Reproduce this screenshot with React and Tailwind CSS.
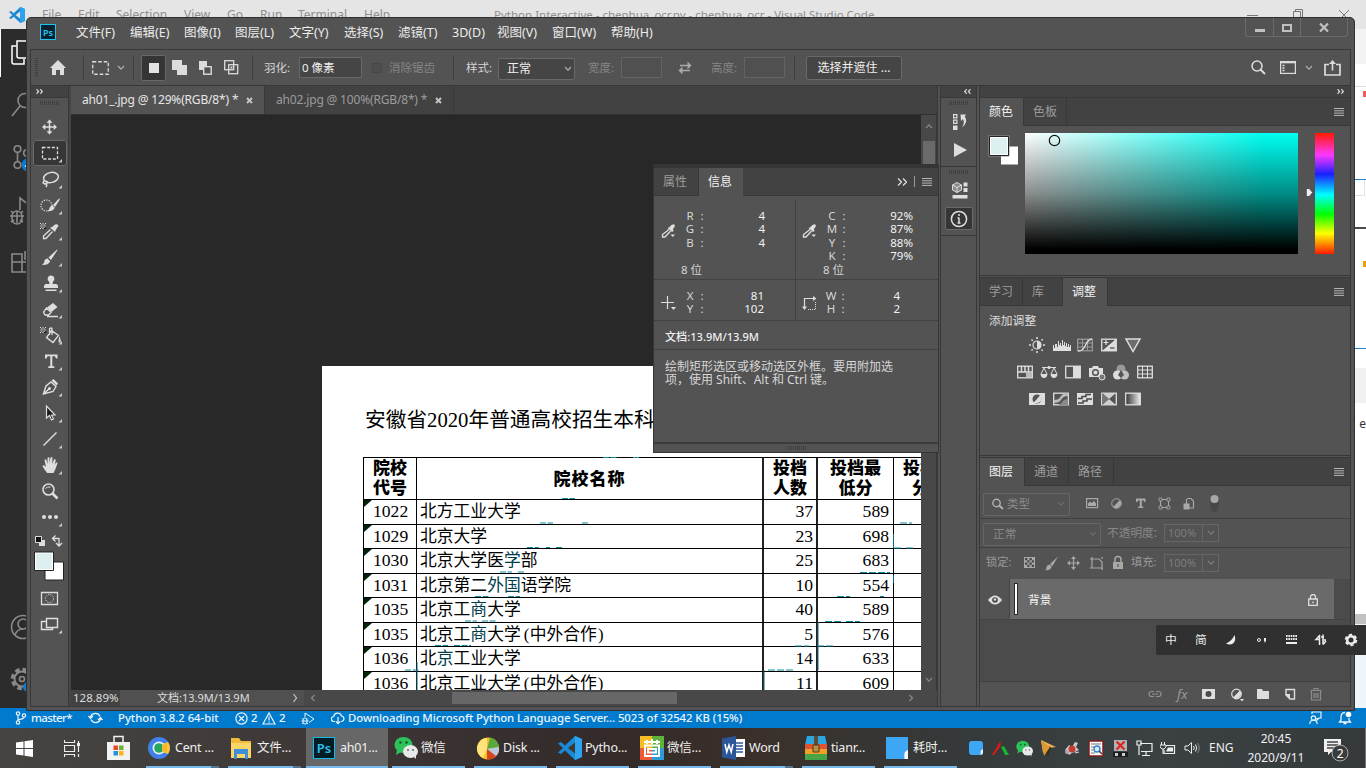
import React from 'react';

const Svg = ({ w, h, className = '', children }) => (
  <svg width={w} height={h} viewBox={`0 0 ${w} ${h}`} fill="none" className={`block shrink-0 ${className}`}>
    {children}
  </svg>
);

const Burger = () => (
  <Svg w={10} h={8}>
    <path d="M0 .5h10M0 2.800h10M0 5.100h10M0 7.400h10" stroke="#b5b5b5" />
  </Svg>
);

const Chev = ({ c = '#b0b0b0', className = '' }) => (
  <Svg w={8} h={6} className={className}>
    <path d="M1 1l3 3.200L7 1" stroke={c} strokeWidth="1.200" />
  </Svg>
);

const Grip = () => (
  <Svg w={19} h={4}>
    <path d="M.5 0v4M2.500 0v4M4.500 0v4M6.500 0v4M8.500 0v4M10.500 0v4M12.500 0v4M14.500 0v4M16.500 0v4M18.500 0v4" stroke="#404040" />
  </Svg>
);

const Dbl = ({ flip }) => (
  <Svg w={7} h={5} className={flip ? '-scale-x-100' : ''}>
    <path d="M0 0h1.200L3.500 2.500 1.200 5H0l1.500-2.500zM3.700 0h1.200L7.200 2.500 4.900 5H3.700l1.500-2.500z" fill="#d0d0d0" />
  </Svg>
);

/* ---------- editor behind the Photoshop window ---------- */

const codeMenu = [
  ['File', 'w-[36px]'], ['Edit', 'w-[38px]'], ['Selection', 'w-[68px]'], ['View', 'w-[43px]'],
  ['Go', 'w-[33px]'], ['Run', 'w-[38px]'], ['Terminal', 'w-[66px]'], ['Help', 'w-[130px]'],
];

const CodeLogo = ({ s = 16 }) => (
  <svg width={s} height={s} viewBox="0 0 24 24" className="block shrink-0">
    <path d="M17 0l7 3v18l-7 3L7 14.500 3 18l-3-1.500L5 12 0 7.500 3 6l4 3.500z" fill="#1a8ad6" />
    <path d="M17 6.500L10 12l7 5.500z" fill={s > 18 ? '#3b3836' : '#e5e5e5'} />
    <path d="M17 0l7 3v18l-7 3z" fill="#2fa4ee" />
  </svg>
);

function Editor() {
  return (
    <div className="flex h-[728px] w-[1366px] flex-col">
      <div className="flex h-[29px] shrink-0 items-center bg-[#e5e5e5] pl-[9px] text-[12px] text-[#8f8f8f]">
        <CodeLogo s={16} />
        <div className="ml-[17px] flex pt-px">
          {codeMenu.map(([t, w]) => <span key={t} className={`${w} shrink-0`}>{t}</span>)}
        </div>
        <span className="w-[752px] pt-px text-[11.500px] whitespace-nowrap">Python Interactive - chenhua_ocr.py - chenhua_ocr - Visual Studio Code</span>
        <Svg w={106} h={12}>
          <path d="M1 6.500h11M47.500 11V2.500h7V11M49.500 2.500V.5h7V9M93 1l10 10M103 1L93 11" stroke="#777" />
        </Svg>
      </div>
      <div className="flex h-[679px] shrink-0 justify-between">
        <div className="flex w-[27px] flex-col overflow-hidden bg-[#2c2c2c]">
          <Svg w={30} h={679}>
            <path d="M.5 0v48" stroke="#fff" strokeWidth="1" />
            <g stroke="#fff" strokeWidth="1.500"><path d="M17 12h10v17H19q-2 0-2-2z" /><path d="M16.500 17H12v16q0 2 2 2h10v-5" /></g>
            <g stroke="#8a8a8a" strokeWidth="1.600">
              <circle cx="25" cy="71.500" r="7" /><path d="M20 77l-8 10" />
              <circle cx="17.500" cy="120" r="3.300" /><circle cx="17.500" cy="136" r="3.300" /><path d="M17.500 123v10" /><circle cx="27" cy="124" r="3.300" />
              <path d="M20 181v-12l9 7M17 182a5 5 0 015 5v3a5 5 0 01-10 0v-3a5 5 0 015-5zM11 182l2 2M23 182l-2 2M10 187h14M11 193l3-2M23 193l-3-2M17 182v12" />
              <path d="M12 225h10v18H12zM12 233h16v10H22M25 223h5v7h-5z" />
              <circle cx="23" cy="598" r="11.500" /><circle cx="23" cy="595" r="5" /><path d="M15 606q2-6 8-6" />
              <circle cx="22" cy="650" r="9.500" strokeDasharray="4.500 3" strokeWidth="3.500" /><circle cx="22" cy="650" r="7.500" strokeWidth="2" /><circle cx="22" cy="650" r="2.500" />
            </g>
            <circle cx="28" cy="136" r="6.500" fill="#0e7bd0" /><path d="M25 138l3-5v6" stroke="#fff" />
            <circle cx="28" cy="658" r="5" fill="#0e7bd0" />
          </Svg>
        </div>
        <div className="flex w-[11px] flex-col bg-white">
          <div className="h-[35px] bg-[#f3f3f3]" />
          <div className="h-[22px]" />
          <div className="h-px bg-[#ddd]" />
          <div className="mt-1 ml-[8px] h-[6px] bg-[#f65a5e]" />
          <div className="mt-[82px] h-px bg-[#1f82cb]" />
          <div className="mr-px h-[16px] border-r border-b border-[#e2e2e2]" />
          <div className="mt-[31px] h-[2px] bg-[#4c4c4c]" />
          <div className="mt-[32px] ml-[8px] h-[6px] bg-[#e9a200]" />
          <div className="mt-[81px] h-px bg-[#1f82cb]" />
          <div className="mt-[19px] h-[35px] bg-[#f1f1f1]" />
          <div className="mt-[12px] flex h-[18px] justify-end text-[12px] text-[#333]">e</div>
          <div className="mt-[181px] h-[10px] bg-[#c2c2c2]" />
          <div className="grow bg-[#eef5fb]" />
        </div>
      </div>
      <div className="flex h-[20px] shrink-0 items-center bg-[#007acc] pl-[15px] text-[11.5px] font-medium text-[#eaf5ff]">
        <Svg w={12} h={14}><g stroke="#eaf5ff" strokeWidth="1.200"><circle cx="3" cy="2.500" r="1.700" /><circle cx="3" cy="11.500" r="1.700" /><circle cx="9" cy="4.500" r="1.700" /><path d="M3 4.200v5.600M9 6.200c0 2.500-6 1.500-6 3.500" /></g></Svg>
        <span className="ml-[4px] w-[57px] tracking-[-0.6px]">master*</span>
        <Svg w={15} h={12}><g stroke="#eaf5ff" strokeWidth="1.300"><path d="M2.500 5.500a5 5 0 019.500-1M12.500 6.500a5 5 0 01-9.500 1" /><path d="M.5 4l2 2.300L5 4M10 8l2.500-2.300L14.500 8" /></g></Svg>
        <span className="ml-[15px] w-[117px] text-[11.3px] whitespace-nowrap">Python 3.8.2 64-bit</span>
        <Svg w={13} h={13}><g stroke="#eaf5ff" strokeWidth="1.200"><circle cx="6.500" cy="6.500" r="5.600" /><path d="M4 4l5 5M9 4L4 9" /></g></Svg>
        <span className="ml-[3px] w-[11px]">2</span>
        <Svg w={14} h={13}><path d="M7 1l6 11H1zM7 4.500v4M7 9.500v1.200" stroke="#eaf5ff" strokeWidth="1.200" /></Svg>
        <span className="ml-[3px] w-[22px]">2</span>
        <Svg w={14} h={13}><path d="M4 5V1l9 6-5 3.500M4 6a2 2 0 012 2v2a2 2 0 01-4 0V8a2 2 0 012-2zM.5 9h7M1 6.500l1 1M7 6.500l-1 1M1 12l1.200-1M7 12l-1.200-1" stroke="#eaf5ff" /></Svg>
        <Svg w={14} h={13} className="ml-[16px]"><path d="M4 9.500H3a2.500 2.500 0 01-.3-5A4 4 0 0110.500 4a2.800 2.800 0 01.3 5.500H10M7 5v6.500M4.800 9.300L7 11.600l2.200-2.300" stroke="#eaf5ff" strokeWidth="1.200" /></Svg>
        <span className="ml-[3px] w-[961px] text-[11.4px] tracking-[-0.08px] whitespace-nowrap">Downloading Microsoft Python Language Server... 5023 of 32542 KB (15%)</span>
        <Svg w={13} h={14}><g stroke="#eaf5ff" strokeWidth="1.200"><path d="M3 3V1h9v6h-2l-2 2V7" /><circle cx="4.500" cy="7" r="2.200" /><path d="M.8 13c0-5 7.400-5 7.400 0" /></g></Svg>
        <Svg w={14} h={14} className="ml-[16px]"><path d="M7 1.500C4 1.500 3 4 3 6v3l-1.500 2h11L11 9V7M5.500 12.500h3" stroke="#eaf5ff" strokeWidth="1.300" /><circle cx="10.500" cy="3.500" r="2.800" fill="#fff" /></Svg>
      </div>
    </div>
  );
}

/* ---------- Photoshop chrome ---------- */

const psMenu = [
  ['文件(F)', 'w-[54px]'], ['编辑(E)', 'w-[54px]'], ['图像(I)', 'w-[51px]'], ['图层(L)', 'w-[54px]'],
  ['文字(Y)', 'w-[55px]'], ['选择(S)', 'w-[54px]'], ['滤镜(T)', 'w-[54px]'], ['3D(D)', 'w-[45px]'],
  ['视图(V)', 'w-[55px]'], ['窗口(W)', 'w-[59px]'], ['帮助(H)', 'w-[641px]'],
];

function TitleRow() {
  return (
    <div className="flex h-[31px] shrink-0 items-start pl-[13px] text-[12.5px] text-[#ececec]">
      <div className="mt-[6px] flex h-[16px] w-[16px] items-center justify-center border border-[#1cc4f5] bg-[#06222e] text-[9px] leading-none font-semibold text-[#2cc9f5]">Ps</div>
      <div className="mt-[6px] ml-[20px] flex">
        {psMenu.map(([t, w]) => <span key={t} className={`${w} shrink-0 leading-[18px] whitespace-nowrap`}>{t}</span>)}
      </div>
      <div className="-ml-[7px] flex h-[19px] w-[103px] rounded-b-[3px] border border-t-0 border-[#6b6b6b]">
        <div className="flex w-[28px] items-center justify-center border-r border-[#6b6b6b]"><div className="mt-[7px] h-[3px] w-[10px] bg-[#c0c0c0]" /></div>
        <div className="flex w-[27px] items-center justify-center border-r border-[#6b6b6b]"><div className="mt-px h-[8px] w-[10px] border-2 border-[#c0c0c0]" /></div>
        <div className="flex grow items-center justify-center"><Svg w={10} h={9}><path d="M1 .5l8 8M9 .5l-8 8" stroke="#c0c0c0" strokeWidth="2.200" /></Svg></div>
      </div>
    </div>
  );
}

const Sep = ({ className }) => <div className={`h-[25px] w-px shrink-0 bg-[#404040] ${className}`} />;

function Options() {
  return (
    <div className="flex h-[36px] shrink-0 items-center border-b border-[#383838] pl-[4px] text-[12px] text-[#d5d5d5]">
      <Svg w={3} h={20}><path d="M0 .5h3M0 2.500h3M0 4.500h3M0 6.500h3M0 8.500h3M0 10.500h3M0 12.500h3M0 14.500h3M0 16.500h3M0 18.500h3" stroke="#404040" /></Svg>
      <Svg w={16} h={15} className="ml-[12px]"><path d="M8 0l8 8h-2v7h-4v-5H6v5H2V8H0z" fill="#dcdcdc" /></Svg>
      <Sep className="ml-[17px]" />
      <Svg w={17} h={14} className="ml-[8px]"><rect x=".75" y=".75" width="15.500" height="12.500" stroke="#dcdcdc" strokeWidth="1.300" strokeDasharray="3.500 2" /></Svg>
      <Chev className="ml-[8px]" />
      <Sep className="ml-[8px]" />
      <div className="ml-[7px] flex h-[26px] w-[25px] items-center justify-center rounded-[2px] border border-[#686868] bg-[#353535]"><div className="h-[10px] w-[10px] bg-[#e2e2e2]" /></div>
      <Svg w={15} h={15} className="ml-[6px]"><path d="M0 0h10v5h5v10H5v-5H0z" fill="#dcdcdc" /></Svg>
      <Svg w={13} h={14} className="ml-[12px]"><path d="M0 0h8v5H5v4H0z" fill="#dcdcdc" /><rect x="4.700" y="5.700" width="7.500" height="7.500" stroke="#dcdcdc" strokeWidth="1.400" /></Svg>
      <Svg w={15} h={15} className="ml-[12px]"><rect x=".7" y=".7" width="9" height="9" stroke="#dcdcdc" strokeWidth="1.300" /><rect x="4.700" y="4.700" width="9" height="9" stroke="#dcdcdc" strokeWidth="1.300" /><path d="M6.500 6.500h2v2h-2z" fill="#dcdcdc" /></Svg>
      <Sep className="ml-[13px]" />
      <span className="ml-[11px] w-[35px] text-[11.5px] whitespace-nowrap">羽化:</span>
      <div className="flex h-[21px] w-[63px] items-center border border-[#686868] bg-[#454545] pl-[2px] text-[11.5px] text-[#f0f0f0]">0 像素</div>
      <div className="ml-[10px] h-[10px] w-[10px] border border-[#474747] bg-[#4e4e4e]" />
      <span className="ml-[7px] w-[64px] text-[11.5px] text-[#858585]">消除锯齿</span>
      <Sep />
      <span className="ml-[12px] w-[32px] text-[11.5px] whitespace-nowrap">样式:</span>
      <div className="mt-[2px] flex h-[22px] w-[77px] items-center justify-between rounded-[2px] border border-[#686868] bg-[#454545] pr-[2px] pl-[8px] text-[#f0f0f0]">正常<Chev /></div>
      <span className="ml-[13px] w-[33px] text-[11.5px] whitespace-nowrap text-[#858585]">宽度:</span>
      <div className="h-[21px] w-[41px] border border-[#636363] bg-[#505050]" />
      <Svg w={14} h={14} className="ml-[16px]"><path d="M2 4.500h8M4 9.500h8" stroke="#a8a8a8" strokeWidth="1.600" /><path d="M9.500 .5l4 4-4 4zM4.500 5.500l-4 4 4 4z" fill="#a8a8a8" /></Svg>
      <span className="ml-[19px] w-[33px] text-[11.5px] whitespace-nowrap text-[#858585]">高度:</span>
      <div className="h-[21px] w-[41px] border border-[#636363] bg-[#505050]" />
      <Sep className="ml-[9px]" />
      <div className="ml-[11px] flex h-[24px] w-[96px] shrink-0 items-center justify-center rounded-[2px] border border-[#686868] bg-[#454545] text-[12px] whitespace-nowrap text-[#f0f0f0]">选择并遮住 ...</div>
      <Svg w={15} h={15} className="ml-[349px]"><circle cx="6" cy="6" r="5" stroke="#dcdcdc" strokeWidth="1.500" /><path d="M9.500 9.500l4.500 4.500" stroke="#dcdcdc" strokeWidth="2" /></Svg>
      <Svg w={16} h={13} className="ml-[14px]"><rect x=".6" y=".6" width="14.800" height="11.800" stroke="#dcdcdc" strokeWidth="1.200" /><path d="M1 1.500h14" stroke="#dcdcdc" strokeWidth="1.600" /><path d="M2.500 4.500h2M2.500 7h2M2.500 9.500h2" stroke="#dcdcdc" strokeWidth="1.500" /></Svg>
      <Chev className="ml-[9px]" />
      <Svg w={17} h={16} className="ml-[11px]"><path d="M5 4.500H1V15h15V4.500h-4" stroke="#dcdcdc" strokeWidth="1.700" /><path d="M8.500 10.500V3" stroke="#dcdcdc" strokeWidth="1.600" /><path d="M8.500 0L12 4H5z" fill="#dcdcdc" /></Svg>
    </div>
  );
}

const F = '#dedede';
const Checks = () => <g fill="#e6e6e6"><rect x="7" y="5" width="6" height="6" fill="#1c1c1c" /><path d="M7 5h1.200v1.200H7zM9.400 5h1.200v1.200H9.400zM11.800 5H13v1.200h-1.200zM8.200 6.200h1.200v1.200H8.200zM10.600 6.200h1.200v1.200h-1.200zM7 7.400h1.200v1.200H7zM9.400 7.400h1.200v1.200H9.400zM11.800 7.400H13v1.200h-1.200zM8.200 8.600h1.200v1.200H8.200zM10.600 8.600h1.200v1.200h-1.200zM7 9.800h1.200V11H7zM9.400 9.800h1.200V11H9.400z" /></g>;

const tools = [
  ['move', <g key="a"><path d="M16.500 7v12M10.500 13h12" stroke={F} strokeWidth="1.500" /><path d="M16.500 5.500l3 3.300h-6zM16.500 20.500l3-3.300h-6zM9 13l3.300-3v6zM24 13l-3.300-3v6z" fill={F} /></g>],
  ['marquee', <rect key="a" x="9.500" y="7.500" width="15" height="11.500" stroke={F} strokeWidth="1.300" strokeDasharray="3 1.700" />],
  ['lasso', <g key="a" stroke={F} strokeWidth="1.500"><ellipse cx="18" cy="11.500" rx="7.500" ry="5" transform="rotate(-12 18 11.500)" /><path d="M11.500 14.500q-2.500 2-.5 3t3-.5-1.500-2M13 18q1.500 1 0 3" /></g>],
  ['quick', <g key="a"><circle cx="13.500" cy="13.500" r="5.500" stroke={F} strokeWidth="1.200" strokeDasharray="1.300 1.200" /><path d="M26.500 6l-6.500 7 2 2L26.500 8z" fill={F} /><path d="M19.500 13.500l2.300 2.300q-2 4-7.800 3.500 2.500-1 2.500-3t3-2.800z" fill={F} /></g>],
  ['eyedropper', <g key="a"><Checks /><path d="M19 9l3-2.500q3-1 3.500 1.500L23 11.500l-1 2.500-5-4.500z" fill={F} /><path d="M17.500 11.500L10.500 18v2.500h2.500l6.500-7" stroke={F} strokeWidth="1.300" /></g>],
  ['brush', <path key="a" d="M24 5.500l-8.500 8 2.500 2.500 6.500-10zM14.500 14.500l2.700 2.700Q15 21.500 9 21q2.500-2 2.500-4t3-2.500z" fill={F} />],
  ['stamp', <path key="a" d="M18 5.500a3.300 3.300 0 012 6l-.5 2.500h4l1.500 1.500V18H11v-2.500l1.500-1.500h4l-.5-2.500a3.300 3.300 0 012-6zM12.500 19.500h11V21h-11z" fill={F} />],
  ['eraser', <g key="a"><path d="M20 7l4.500 4-6 5-4.500-4.500z" fill={F} /><path d="M13.500 12l4.500 4.500-2.500 2.500H12l-1.500-3zM14 20.500h11" stroke={F} strokeWidth="1.300" /></g>],
  ['bucket', <g key="a"><Checks /><path d="M18.500 8.500l7 5-5.500 7-6.500-5zM16.500 13V7q2-2 2.500 0v6" stroke={F} strokeWidth="1.300" /><path d="M26 14q2.500 4 1.500 6.500h-2z" fill={F} /></g>],
  ['type', <path key="a" d="M12 6.500h12.500v4H23l-1-2.200h-2.700v10h2v1.700h-6v-1.700h2v-10h-2.800l-1 2.200H12z" fill={F} />],
  ['pen', <g key="a"><path d="M10.500 20l2.500-8 5-4 5 4.500-3 5zM10.500 20l6-5.500" stroke={F} strokeWidth="1.400" /><circle cx="16.500" cy="14.500" r="1.500" fill={F} /><path d="M18.500 6.500l2-1.500 4.500 4.500-1.500 2z" fill={F} /></g>],
  ['select', <path key="a" d="M13.500 6v12l3-2.500 2 4.500 2-1-2-4h3.500z" fill="#1b1b1b" stroke={F} strokeWidth="1.200" />],
  ['line', <path key="a" d="M10.500 19.500L23.500 6.500" stroke={F} strokeWidth="1.500" />],
  ['hand', <path key="a" d="M14 21l-4.500-6.500q.5-2 2.500-.500l1 1L11.500 8q1-1.500 2 .3l1 3.700V6q1-1.500 2 0v5.500l1-6q1.500-1 2 .500l-.3 6L21 7.500q1.500-1 1.800.8L21.500 13l1.500-2.500q1.700-.5 1.500 1L22 18l-1.500 3z" fill={F} />],
  ['zoom', <g key="a"><circle cx="15.500" cy="11.500" r="5.500" stroke={F} strokeWidth="1.600" /><path d="M12.500 10.500q1.500-2 5-1.500" stroke={F} /><path d="M19.500 15.500l5 5" stroke={F} strokeWidth="2.600" /></g>],
  ['more', <g key="a" fill={F}><circle cx="11" cy="13" r="2" /><circle cx="17" cy="13" r="2" /><circle cx="23" cy="13" r="2" /></g>],
];
const plain = { move: 1, zoom: 1 };

function Tools() {
  return (
    <div className="flex w-[38px] shrink-0 flex-col border-r border-[#383838]">
      <div className="flex h-[12px] items-center border-b border-[#383838] bg-[#424242] pl-[5px]"><Dbl /></div>
      <div className="flex h-[16px] justify-center pt-[3px]"><Grip /></div>
      {tools.map(([id, art]) => (
        <div key={id} className={id === 'marquee' ? 'ml-[2px] h-[26px] w-[34px] rounded-[3px] bg-[#363636] outline outline-1 -outline-offset-1 outline-[#6a6a6a]' : 'ml-[2px] h-[26px] w-[34px]'}>
          <Svg w={34} h={26}>{art}{!plain[id] && <path d="M29 19v3.500h-3.500z" fill="#c8c8c8" />}</Svg>
        </div>
      ))}
      <Svg w={37} h={110}>
        <path d="M8 10h6v6H8z" fill={F} /><path d="M4.500 6.500h6v6h-6z" fill="#111" stroke={F} />
        <path d="M22 8.500h6v7M24.500 5.500l-3 3 3 3M25 13l3 3 3-3" stroke={F} strokeWidth="1.300" />
        <path d="M14 32h18.500v18H14z" fill="#fff" stroke="#222" /><path d="M3.500 22h19v18.500h-19z" fill="#fff" stroke="#222" /><path d="M5 23.500h16v15.500H5z" fill="#dcf1ef" />
        <path d="M10.500 62.500h16v12h-16z" stroke={F} strokeWidth="1.300" /><circle cx="18.500" cy="68.500" r="4" stroke={F} strokeDasharray="1.200 1.200" />
        <path d="M16 91.500h-5.500v8h11V97" stroke={F} strokeWidth="1.400" /><path d="M15.500 88.500h11v9h-11z" stroke={F} strokeWidth="1.400" /><path d="M31 100v3.500h-3.500z" fill="#c8c8c8" />
      </Svg>
    </div>
  );
}

/* ---------- document ---------- */

const rows = [
  ['1022', '北方工业大学', '37', '589'],
  ['1029', '北京大学', '23', '698'],
  ['1030', '北京大学医|学|部', '25', '683'],
  ['1031', '北京第二|外国|语学院', '10', '554'],
  ['1035', '北京工|商|大学', '40', '589'],
  ['1035', '北京工|商|大学', '5', '576', '中外合作'],
  ['1036', '北|京|工业大学', '14', '633'],
  ['1036', '北京工业大学', '11', '609', '中外合作'],
];

const Head = ({ children, className }) => (
  <div className={`flex h-[41px] shrink-0 items-center border-l border-black text-[17px] leading-[20px] font-black whitespace-nowrap ${className}`}>{children}</div>
);

function Page() {
  return (
    <div className="relative h-[330px] w-[599px] overflow-hidden bg-white font-['Liberation_Serif','Noto_Sans_CJK_SC',serif] text-black">
      <div className="flex h-[91px] items-start pt-[39px] pl-[43px] text-[20.7px] leading-[30px] whitespace-nowrap">安徽省2020年普通高校招生本科</div>
      <div className="ml-[41px] w-[640px]">
        <div className="flex border-t border-black">
          <Head className="w-[53px] justify-center">院校<br />代号</Head>
          <Head className="w-[346px] justify-center pt-[2px] tracking-[1px]">院校名称</Head>
          <Head className="w-[54px] justify-center border-l-2 border-l-[#222]">投档<br />人数</Head>
          <Head className="w-[77px] justify-center border-l-2 border-l-[#222] text-center">投档最<br />低分</Head>
          <Head className="w-[77px] pl-[9px]"><div><div>投档最</div><div className="pl-[9px]">分</div></div></Head>
        </div>
        {rows.map(([a, b, c, d, e], i) => (
          <div key={i} className="flex h-[24.5px] border-t border-black text-[17.6px] leading-[22px]">
            <div className="flex w-[53px] border-l border-black">
              <Svg w={8} h={8}><path d="M0 0h8L0 7z" fill="#04210a" /></Svg>
              <span className="ml-px">{a}</span>
            </div>
            <div className="flex w-[346px] border-l border-black pt-px pl-[3px] text-[16.8px] whitespace-nowrap">
              {b.split('|').map((s, j) => <span key={j} className={j % 2 ? 'text-[#003c4c]' : ''}>{s}</span>)}
              {e && <><span className="w-[9px] pl-[3px]">(</span><span>{e}</span><span className="pl-px">)</span></>}
            </div>
            <div className="w-[54px] border-l-2 border-[#222] pr-[3px] text-right">{c}</div>
            <div className="w-[77px] border-l-2 border-[#222] pr-[4px] text-right">{d}</div>
            <div className="w-[77px] border-l border-black" />
          </div>
        ))}
      </div>
      <svg className="absolute inset-0" width="599" height="330" viewBox="0 0 599 330" fill="none" stroke="#0e8b9c" strokeWidth="1">
        <path d="M281 91.500h14M311 91.500h7M240 132.500h13M218 157h13M260 157h6M205 181.500h12M224 181.500h4M234 181.500h6M178 206h12M196 206h7M153 230.500h14M186 230.500h12M143 255h12M160 255h14M113 279.500h13M132 279.500h17M83 304h14" strokeDasharray="6 1.500" />
        <path d="M578 157h12M572 182h8M584 182h8M538 206.500h30M515 230.500h13M558 230.500h4M503 255.500h16M524 255.500h14M473 280h14M495 280h16M446 304h26" strokeDasharray="7 2" />
        <path d="M571.500 168v14M571.500 209v8M496 256v48M442 304v20M95 296v28" stroke="#15657a" />
      </svg>
    </div>
  );
}

function Doc() {
  return (
    <div className="flex w-[866px] shrink-0 flex-col">
      <div className="flex h-[29px] shrink-0 border-b border-[#303030] bg-[#424242] text-[12px] tracking-[-0.17px]">
        <div className="flex w-[194px] items-center border-r border-[#383838] bg-[#535353] pl-[11px] text-[#e6e6e6]">
          <span className="w-[164px] whitespace-nowrap">ah01_.jpg @ 129%(RGB/8*) *</span>
          <Svg w={7} h={7}><path d="M1 1l5 5M6 1L1 6" stroke="#c4c4c4" strokeWidth="1.900" /></Svg>
        </div>
        <div className="flex w-[189px] items-center border-r border-[#383838] pl-[11px] text-[#9c9c9c]">
          <span className="w-[159px] whitespace-nowrap">ah02.jpg @ 100%(RGB/8*) *</span>
          <Svg w={7} h={7}><path d="M1 1l5 5M6 1L1 6" stroke="#c4c4c4" strokeWidth="1.900" /></Svg>
        </div>
      </div>
      <div className="flex h-[575px] shrink-0">
        <div className="w-[850px] shrink-0 overflow-hidden bg-[#282828] pt-[251px] pl-[251px]"><Page /></div>
        <div className="flex w-[16px] flex-col items-center justify-between border-r border-[#383838] bg-[#484848] pt-[8px] pb-[7px]">
          <div className="flex flex-col items-center gap-[12px]">
            <Chev className="rotate-180" c="#888" />
            <div className="h-[24px] w-[12px] bg-[#6a6a6a]" />
          </div>
          <Chev c="#888" />
        </div>
      </div>
      <div className="flex h-[16px] shrink-0 items-center bg-[#484848] text-[12px] text-[#dedede]">
        <span className="w-[49px] bg-[#424242] pl-[2px] text-[11.5px] leading-[16px]">128.89%</span>
        <div className="flex h-[16px] w-[184px] items-center justify-between bg-[#505050] pr-[6px] pl-[37px] text-[11px] whitespace-nowrap">
          <span>文档:13.9M/13.9M</span>
          <Svg w={6} h={10}><path d="M1.500 1l3 4-3 4" stroke="#c6c6c6" strokeWidth="1.200" /></Svg>
        </div>
        <Svg w={6} h={8} className="ml-[6px]"><path d="M4.500 1l-3 3 3 3" stroke="#8c8c8c" strokeWidth="1.200" /></Svg>
        <div className="ml-[136px] h-[12px] w-[225px] bg-[#676767]" />
        <Svg w={6} h={8} className="ml-[231px]"><path d="M1.500 1l3 3-3 3" stroke="#8c8c8c" strokeWidth="1.200" /></Svg>
      </div>
    </div>
  );
}

function Dock() {
  return (
    <div className="flex w-[37px] shrink-0 flex-col border-r border-l border-[#383838] bg-[#535353]">
      <div className="flex h-[12px] items-center border-b border-[#383838] bg-[#424242] pl-[23px]"><Dbl flip /></div>
      <div className="flex h-[69px] flex-col items-center border-b border-[#383838] pt-[3px]">
        <Grip />
        <Svg w={17} h={18} className="mt-[8px] ml-[3px]"><path d="M1.600 1.600h3.300v3.300H1.600zM1.600 7.100h3.300v3.300H1.600z" stroke={F} strokeWidth="1.200" /><path d="M1 12.500h4.500V17H1z" fill={F} /><path d="M8.500 1.500H14L12.800 3.500q4 5.500-2.800 11 3-4.500 1-8.500L9 8z" fill={F} /></Svg>
        <Svg w={15} h={14} className="mt-[12px] ml-[3px]"><path d="M1 0l13 7-13 7z" fill={F} /></Svg>
      </div>
      <div className="flex h-[69px] flex-col items-center border-b border-[#383838] pt-[3px]">
        <Grip />
        <Svg w={16} h={17} className="mt-[8px] ml-[2px]"><path d="M5 .5l4.500 2.500v5L5 10.500.5 8V3z" fill="#888" stroke={F} /><path d="M.5 3L5 5.500 9.500 3M5 5.500v5" stroke={F} /><path d="M11.500.5h4v4h-4zM11.500 6h4v4h-4zM.5 13h15v3.500H.5z" fill={F} /></Svg>
        <div className="mt-[8px] flex h-[23px] w-[28px] items-center justify-center rounded-[2px] border border-[#6a6a6a] bg-[#363636]">
          <Svg w={18} h={18}><circle cx="9" cy="9" r="7.600" stroke={F} strokeWidth="1.500" /><path d="M9 4v2M9 7.500V13M7.500 8H9M7.500 13h3" stroke={F} strokeWidth="1.500" /></Svg>
        </div>
      </div>
    </div>
  );
}

/* ---------- right panels ---------- */

const Tabs = ({ items }) => (
  <div className="flex h-[28px] shrink-0 border-b border-[#383838] bg-[#424242] text-[12px]">
    {items.map(([t, w, on]) => (
      <div key={t} className={`flex h-[28px] items-center border-r border-[#383838] pl-[9px] ${w} ${on ? 'bg-[#535353] text-[#f2f2f2]' : 'text-[#9c9c9c]'}`}>{t}</div>
    ))}
    <div className="flex grow items-center justify-end pr-[6px]"><Burger /></div>
  </div>
);

const A = ({ children }) => <Svg w={24} h={18}>{children}</Svg>;
const Frame = () => <rect x="4.700" y="3.200" width="14.600" height="11.600" stroke={F} strokeWidth="1.300" />;

function Adjust() {
  return (
    <div className="flex h-[149px] shrink-0 flex-col">
      <div className="pt-[5px] pl-[9px] text-[11.8px] leading-[19px] text-[#dedede]">添加调整</div>
      <div className="mt-[6px] flex pl-[44.5px]">
        <A><circle cx="12" cy="9" r="4" stroke={F} strokeWidth="1.200" /><path d="M12 5a4 4 0 010 8z" fill={F} /><path d="M12 1v2M12 15v2M4 9h2M18 9h2M6.500 3.500l1.200 1.200M16.500 13.500l1.200 1.200M6.500 14.500l1.200-1.200M16.500 4.500l1.200-1.200" stroke={F} strokeWidth="1.500" /></A>
        <A><path d="M4 15V9h1v3h1V8h2v3h1V5h1v4h1V7h1v3h1V4h1v5h1V6h1v4h1V7h1v4h1V8h1v3h1V9h1v6z" fill={F} /></A>
        <A><rect x="4.700" y="3.200" width="14.600" height="11.600" stroke="#aaa" /><path d="M9.500 3v12M14.500 3v12M5 7h14M5 11h14" stroke="#999" /><path d="M5 15c9 0 6-11 14-12" stroke={F} strokeWidth="1.300" /></A>
        <A><Frame /><path d="M19 3v12H5z" fill={F} /><path d="M6.500 6.500h5M9 4v5" stroke={F} strokeWidth="1.200" /><path d="M13 12h4.500" stroke="#444" strokeWidth="1.200" /></A>
        <A><path d="M5 3h14l-7 12.500z" fill="#6c6c6c" stroke={F} strokeWidth="1.500" /></A>
      </div>
      <div className="mt-[9px] flex pl-[33px]">
        <A><Frame /><path d="M8.500 3v6M12 3v6M15.500 3v6M5 9h14" stroke={F} strokeWidth="1.500" /><path d="M13 10h6v4h-6z" fill="#bbb" /></A>
        <A><path d="M12 3v3M5 4.500h14M7 5l-3 6M7 5l3 6M17 5l-3 6M17 5l3 6" stroke={F} /><path d="M3.500 11h7q-.5 4-3.500 4t-3.500-4zM13.500 11h7q-.5 4-3.500 4t-3.500-4z" fill={F} /><circle cx="12" cy="4.500" r="1.600" fill={F} /></A>
        <A><Frame /><path d="M12 3h7v12h-7z" fill={F} /></A>
        <A><path d="M4 5h3l1-2h5l1 2h4v9H4z" fill={F} /><circle cx="10.500" cy="9.500" r="2.800" stroke="#535353" strokeWidth="1.500" /><circle cx="17" cy="14" r="3" fill="#777" stroke={F} /></A>
        <A><circle cx="12" cy="6" r="4.500" fill="#999" /><circle cx="8.500" cy="12" r="4.500" fill="#dcdcdc" /><circle cx="15.500" cy="12" r="4.500" fill="#c0c0c0" /><path d="M12 7l3 5-3 3-3-3z" fill="#555" /></A>
        <A><rect x="4.700" y="3.200" width="14.600" height="11.600" stroke={F} strokeWidth="1.300" /><path d="M9.500 3v12M14.500 3v12M5 7h14M5 11h14" stroke={F} /></A>
      </div>
      <div className="mt-[9px] flex pl-[45px]">
        <A><path d="M4 3h16v12H4z" fill={F} /><circle cx="12" cy="9" r="4.500" fill="#555" /><path d="M16 5q-2 1-4 4t-5 4q5 1 8-1t1-7z" fill={F} /></A>
        <A><Frame /><path d="M5 10q5 0 7-4 2-3 7-3v3q-5 0-7 4-2 3-7 3z" fill="#bbb" /><path d="M9 15q3-1 4-3 2-3 6-3v6z" fill="#8a8a8a" /></A>
        <A><path d="M4 3h16v12H4z" fill={F} /><path d="M5 8.500h4V6.500h4V4.500h5M5 13h5v-2h4V9h5" stroke="#454545" strokeWidth="1.500" /></A>
        <A><Frame /><path d="M5 3l7 6 7-6zM5 15l7-6 7 6z" fill="#d0d0d0" /><path d="M5 3l7 6-7 6z" fill="#777" /></A>
        <A><defs><linearGradient id="gm"><stop stopColor="#333" /><stop offset="1" stopColor="#eee" /></linearGradient></defs><rect x="4.700" y="3.200" width="14.600" height="11.600" fill="url(#gm)" stroke={F} strokeWidth="1.300" /></A>
      </div>
    </div>
  );
}

const Percent = () => (
  <div className="flex h-[18px] w-[55px] items-center border border-[#666] text-[11px] text-[#7c7c7c]">
    <span className="w-[38px] border-r border-[#666] pl-[3px] leading-[16px]">100%</span>
    <Chev c="#7c7c7c" className="ml-[4px]" />
  </div>
);

function Layers() {
  const g = '#a8a8a8';
  return (
    <div className="flex grow flex-col">
      <div className="flex h-[33px] shrink-0 items-center border-b border-[#404040] pt-[6px] pb-[2px] pl-[3px]">
        <div className="flex h-[23px] w-[87px] items-center rounded-[2px] border border-[#656565] pr-[4px] pl-[8px] text-[11.5px] text-[#8c8c8c]">
          <Svg w={12} h={12}><circle cx="4.500" cy="5" r="3.700" stroke="#b0b0b0" strokeWidth="1.400" /><path d="M7.200 7.500L11 11" stroke="#b0b0b0" strokeWidth="2" /></Svg>
          <span className="ml-[3px] grow">类型</span><Chev c="#6c6c6c" />
        </div>
        <Svg w={140} h={20} className="ml-[12px]">
          <rect x="4.600" y="4.600" width="11" height="9" stroke={g} strokeWidth="1.200" /><path d="M6 12V9.500l2-2 1.500 1.500L12 7l2 2.500V12z" fill={g} />
          <circle cx="34.500" cy="9.500" r="4.800" stroke={g} /><path d="M38 6a5 5 0 01-7 7z" fill={g} />
          <path d="M54 4.500h9.500V8h-1.300l-.5-1.500h-1.900v6h1.500V14h-5v-1.500h1.500v-6h-1.900L55.300 8H54z" fill={g} />
          <path d="M78.500 5.500h8v8h-8z" stroke={g} /><path d="M77 4h3v3h-3zM85 4h3v3h-3zM77 12h3v3h-3zM85 12h3v3h-3z" fill="#535353" stroke={g} strokeWidth=".8" />
          <path d="M105 4.500h4l2.500 2.500v7H106M104.500 5v5" stroke={g} strokeWidth="1.200" /><path d="M101.500 9.500h6v6h-6z" fill={g} />
          <rect x="128.500" y="1" width="8" height="17" rx="4" fill="#484848" /><circle cx="132.500" cy="5" r="4" fill={g} />
        </Svg>
      </div>
      <div className="flex h-[29px] shrink-0 items-center border-b border-[#404040] pl-[3px] text-[11.7px] text-[#888]">
        <div className="mt-[2px] flex h-[23px] w-[118px] items-center justify-between rounded-[2px] border border-[#656565] pr-[3px] pl-[9px]">正常<Chev c="#6c6c6c" /></div>
        <span className="ml-[6px] w-[57px] whitespace-nowrap">不透明度:</span>
        <Percent />
      </div>
      <div className="flex h-[31px] shrink-0 items-center pb-[2px] pl-[6px] text-[11.7px] text-[#999]">
        <span className="w-[37px] text-[11.3px] whitespace-nowrap">锁定:</span>
        <Svg w={108} h={18}>
          <rect x="1" y="3" width="11" height="11" fill={g} /><path d="M2 4h2.300v2.300H2zM6.500 4h2.300v2.300H6.500zM4.300 6.300h2.200v2.200H4.300zM8.800 6.300H11v2.200H8.800zM2 8.500h2.300v2.200H2zM6.500 8.500h2.300v2.200H6.500zM4.300 10.700h2.200V13H4.300zM8.800 10.700H11V13H8.800z" fill="#484848" />
          <path d="M35 2.500l-8 7.500 2.300 2.300zM26.500 10.500l2.300 2.300q-1.500 4-6.500 3.500 1.200-1 1.200-3t3-2.800z" fill={g} />
          <path d="M50.500 4v10M45.500 9h10" stroke={g} strokeWidth="1.200" /><path d="M50.500 2l2.500 3h-5zM50.500 16l2.500-3h-5zM44 9l3-2.500v5zM57 9l-3-2.500v5z" fill={g} />
          <path d="M69 3v11h11M67 5h9l3 3v8M67 14h2M79 3v2" stroke={g} strokeWidth="1.200" />
          <path d="M90 8h10v7H90z" fill={g} /><path d="M92 8V5.500a3 3 0 016 0V8" stroke={g} strokeWidth="1.500" /><path d="M95 10v3" stroke="#444" />
        </Svg>
        <span className="w-[33px] text-[11.3px] whitespace-nowrap">填充:</span>
        <Percent />
      </div>
      <div className="flex h-[103px] shrink-0 flex-col border-b border-[#404040] bg-[#4b4b4b]">
        <div className="flex h-[41px] border-b border-[#444]">
          <div className="flex w-[30px] items-center justify-center border-r border-[#454545] bg-[#535353] pt-[2px]">
            <Svg w={14} h={10}><path d="M0 5q7-9 14 0-7 9-14 0z" fill={F} /><circle cx="7" cy="5" r="2.800" fill="#4a4a4a" /><circle cx="7" cy="4.500" r="1.200" fill={F} /></Svg>
          </div>
          <div className="flex w-[324px] items-center bg-[#6a6a6a] pl-[4px]">
            <div className="h-[32px] w-[4px] border border-[#2b2b2b] bg-white" />
            <span className="ml-[10px] grow pt-[2px] text-[11.7px] text-[#f4f4f4]">背景</span>
            <Svg w={10} h={12} className="mt-px mr-[16px]"><path d="M.7 5h8.600v6.300H.7zM2.500 5V3a2.500 2.500 0 015 0v2M5 7.500v1.700" stroke={F} strokeWidth="1.300" /></Svg>
          </div>
        </div>
      </div>
      <div className="flex grow items-center justify-end pr-[26px] pb-px">
        <Svg w={177} h={18}>
          <g stroke="#909090" strokeWidth="1.200"><path d="M7 6.500H4.500a2.500 2.500 0 000 5H7M9 6.500h2.500a2.500 2.500 0 010 5H9M5 9h6" /></g>
          <path d="M163.500 5.500h11M167 5V3.500h4V5M164.500 6v9h9V6M167 8v5M169 8v5M171 8v5" stroke="#8c8c8c" strokeWidth="1.200" />
          <path d="M55 4h13v10H55z" fill={F} /><circle cx="61.500" cy="9" r="3" fill="#4a4a4a" />
          <circle cx="89.500" cy="9" r="4.800" stroke={F} strokeWidth="1.200" /><path d="M93 5.500a5 5 0 01-7 7z" fill={F} /><path d="M93 14h4l-2 2.500z" fill={F} />
          <path d="M110 4h5l1 2h6v8h-12z" fill={F} />
          <path d="M139 4.500h8.500v9.500H143l-4-4z" stroke={F} strokeWidth="1.400" /><path d="M138 9h5v5z" fill={F} />
          <text x="30" y="14" fontSize="13" fontStyle="italic" fill="#999" fontFamily="Noto Sans">fx</text>
        </Svg>
      </div>
    </div>
  );
}

function Panels() {
  return (
    <div className="flex w-[370px] shrink-0 flex-col">
      <div className="flex h-[12px] shrink-0 items-center justify-end border-b border-[#383838] bg-[#424242] pr-[6px]"><Dbl /></div>
      <Tabs items={[['颜色', 'w-[44px]', true], ['色板', 'w-[43px]']]} />
      <div className="flex h-[149px] shrink-0 items-start pt-[7px] pl-[8px]">
        <Svg w={30} h={34} className="mt-[2px]"><path d="M12.500 11h18v19h-18z" fill="#fff" stroke="#555" /><path d="M.5.500h21v21H.5z" fill="#999" /><path d="M1.500 1.500h19v19h-19z" fill="#fff" stroke="#222" /><path d="M3 3h16v16H3z" fill="#dcf1ef" /></Svg>
        <div className="ml-[7px] h-[121px] w-[273px] bg-[linear-gradient(to_bottom,transparent,rgba(0,0,0,.45)_50%,#000_96%),linear-gradient(to_right,#fff,#00fff2_88%)] pt-[1px] pl-[23px]">
          <Svg w={13} h={13}><circle cx="6.500" cy="6.500" r="5.200" stroke="#111" strokeWidth="1.200" /></Svg>
        </div>
        <Svg w={7} h={9} className="mt-[55px] ml-[8px]"><path d="M.3 .5h3l3.400 4-3.400 4h-3z" fill="#eee" stroke="#222" strokeWidth=".6" /></Svg>
        <div className="ml-[2px] h-[121px] w-[19px] bg-[linear-gradient(to_bottom,#ff1a00,#ff38ff_18%,#1a20ff_34%,#00ffff_51%,#00ff00_67%,#ffff00_83%,#ff1a00)]" />
      </div>
      <div className="h-[3px] shrink-0 border-t border-b border-[#383838]" />
      <Tabs items={[['学习', 'w-[43px]'], ['库', 'w-[40px]'], ['调整', 'w-[45px]', true]]} />
      <Adjust />
      <div className="h-[3px] shrink-0 border-t border-b border-[#383838]" />
      <Tabs items={[['图层', 'w-[45px]', true], ['通道', 'w-[44px]'], ['路径', 'w-[45px]']]} />
      <Layers />
    </div>
  );
}

/* ---------- floating info panel ---------- */

const Dropper = () => (
  <Svg w={15} h={14}><path d="M8 3.500L10.500 1q3-2 3.500 1L12 5l.5 2-1.500 1L6.500 4z" fill={F} /><path d="M8 5.500l-6.500 5V13H4l5.500-6" stroke={F} strokeWidth="1.300" /><path d="M9.500 10.500h4.500l-2.200 2.500z" fill={F} /></Svg>
);

const Vals = ({ keys, vals, right }) => (
  <>
    <div className="w-[18px] text-center">{keys.map((k) => <div key={k}>{k}</div>)}</div>
    <div className="w-[6px] text-center">{keys.map((k) => <div key={k}>:</div>)}</div>
    <div className={`text-right text-[#f2f2f2] ${right}`}>{vals.map((v, i) => <div key={i}>{v}</div>)}</div>
  </>
);

function Info() {
  return (
    <div className="absolute top-[164px] left-[653px] flex h-[289px] w-[286px] flex-col border border-t-4 border-[#353535] bg-[#535353] text-[11.5px] leading-[13.3px] text-[#d6d6d6]">
      <div className="flex h-[28px] shrink-0 border-b border-[#383838] bg-[#424242] text-[12px]">
        <div className="flex w-[45px] items-center border-r border-[#383838] pl-[9px] text-[#9c9c9c]">属性</div>
        <div className="flex h-[28px] w-[44px] items-center bg-[#535353] pl-[9px] text-[#f2f2f2]">信息</div>
        <div className="flex grow items-center justify-end gap-[7px] pr-[6px]">
          <Svg w={10} h={8}><path d="M1 .5L4.500 4 1 7.500M6 .5L9.500 4 6 7.500" stroke="#dedede" strokeWidth="1.300" /></Svg>
          <div className="h-[11px] w-px bg-[#999]" />
          <Burger />
        </div>
      </div>
      <div className="mt-[4px] flex h-[80px] shrink-0 border-b border-[#424242]">
        <div className="flex w-[142px] flex-col border-r border-[#424242] pt-[9px]">
          <div className="flex h-[54px] pl-[7px]"><div className="w-[20px] pt-[15px]"><Dropper /></div><Vals keys={['R', 'G', 'B']} vals={['4', '4', '4']} right="w-[60px]" /></div>
          <span className="pl-[27px] text-[11.5px]">8 位</span>
        </div>
        <div className="flex w-[142px] flex-col pt-[9px]">
          <div className="flex h-[54px] pl-[7px]"><div className="-ml-px w-[21px] pt-[15px]"><Dropper /></div><Vals keys={['C', 'M', 'Y', 'K']} vals={['92%', '87%', '88%', '79%']} right="w-[66px]" /></div>
          <span className="pl-[27px] text-[11.5px]">8 位</span>
        </div>
      </div>
      <div className="flex h-[41px] shrink-0 border-b border-[#424242]">
        <div className="flex w-[142px] border-r border-[#424242] pt-[9px] pl-[7px]">
          <div className="w-[20px] pt-[7px]"><Svg w={15} h={14}><path d="M6.500 0v13M0 6.500h13" stroke={F} strokeWidth="1.200" /><path d="M10 11h5l-2.500 3z" fill={F} /></Svg></div>
          <Vals keys={['X', 'Y']} vals={['81', '102']} right="w-[59px]" />
        </div>
        <div className="flex pt-[9px] pl-[7px]">
          <div className="-ml-px w-[20px] pt-[7px]"><Svg w={15} h={14}><path d="M2.500 12V2.500H12" stroke={F} strokeWidth="1.200" /><path d="M11 0l3.500 2.500L11 5zM0 10.500h5L2.500 14z" fill={F} /><path d="M13.500 6v7.500H5" stroke={F} strokeDasharray="1 1" /></Svg></div>
          <Vals keys={['W', 'H']} vals={['4', '2']} right="w-[54px]" />
        </div>
      </div>
      <div className="flex h-[29px] shrink-0 items-center border-b border-[#424242] pt-[4px] pl-[11px] text-[11.1px] font-medium text-[#eee]">文档:13.9M/13.9M</div>
      <p className="h-[94px] shrink-0 border-b-2 border-[#3c3c3c] pt-[10px] pl-[11px] text-[12px] leading-[13px] whitespace-nowrap">
        绘制矩形选区或移动选区外框。要用附加选<br />项，使用 Shift、Alt 和 Ctrl 键。
      </p>
      <div className="flex justify-center pt-[2px]"><Grip /></div>
    </div>
  );
}

/* ---------- taskbar ---------- */

const PsTile = () => <div className="flex h-[22px] w-[22px] items-center justify-center border border-[#18b8e8] bg-[#001d26] text-[13px] leading-none font-semibold text-[#2cc0ef]">Ps</div>;

const WeChat = ({ s }) => (
  <svg width={s} height={s} viewBox="0 0 24 24" className="block shrink-0"><ellipse cx="9.500" cy="9" rx="9" ry="8" fill="#2dc25c" /><path d="M3 14l-1 5 5-3z" fill="#2dc25c" /><circle cx="6.500" cy="6.500" r="1.300" fill="#145c2c" /><circle cx="12.500" cy="6.500" r="1.300" fill="#145c2c" /><ellipse cx="16.500" cy="15.500" rx="7.500" ry="6.500" fill="#e9e9e9" /><path d="M19 20l3 3v-5z" fill="#e9e9e9" /><circle cx="14" cy="14" r="1" fill="#666" /><circle cx="19" cy="14" r="1" fill="#666" /></svg>
);

const Folded = ({ s }) => (
  <svg width={s} height={s} viewBox="0 0 22 22" className="block shrink-0"><path d="M0 0h22v22H0z" fill="#3da7f6" /><path d="M22 22v-9q-5 1-3.500 9z" fill="#f4f8fc" /></svg>
);

const apps = [
  ['Cent ...', <Svg key="i" w={22} h={22}><circle cx="11" cy="11" r="11" fill="#3f80ea" /><path d="M20 5q4 6 0 12l-6-2V7z" fill="#fbc62f" /><circle cx="11" cy="11" r="6.500" fill="#e8f2ee" /><circle cx="11" cy="11" r="4.800" fill="#28a760" /><path d="M14 8l5-2v10l-5-2z" fill="#f5b82a" /></Svg>, 'stack'],
  ['文件...', <Svg key="i" w={22} h={22}><path d="M1 1h8l2 3h10v17H1z" fill="#f3b93a" /><path d="M1 6h20v15H1z" fill="#fbd667" /><path d="M4 12h14v10h-3v-5H7v5H4z" fill="#3c8fd8" /></Svg>, 'stack'],
  ['ah01...', <PsTile key="i" />, 'on'],
  ['微信', <WeChat key="i" s={24} />, ''],
  ['Disk ...', <Svg key="i" w={24} h={23}><circle cx="12" cy="11.500" r="11" fill="#f3c21f" /><path d="M11 12L14 .8A11 11 0 0123 10z" fill="#5aa83c" /><path d="M11 12l12-2a11 11 0 01-4 10z" fill="#b9c8dc" /><path d="M11 12l9 7q-3 4-9 3.500z" fill="#d8431f" /><path d="M11 1a10.500 10.500 0 00-4 20L11 12z" fill="#ffe37c" /></Svg>, ''],
  ['Pytho...', <CodeLogo key="i" s={24} />, ''],
  ['微信...', <Svg key="i" w={24} h={24}><path d="M0 0h12v12H0z" fill="#f6bd27" /><path d="M12 0h12v12H12z" fill="#5fb33c" /><path d="M0 12h12v12H0z" fill="#ec5a36" /><path d="M12 12h12v12H12z" fill="#2d9bd8" /><path d="M4 6h16M7 4v4M12 3v5M17 4v4M5 9.500h14V20H5zM8 13h8v3.500H8z" stroke="#fff" strokeWidth="2" /></Svg>, ''],
  ['Word', <Svg key="i" w={24} h={24}><path d="M12 3h11v18H12z" fill="#fff" /><path d="M14 7h7M14 10h7M14 13h7M14 16h7" stroke="#2b579a" strokeWidth="1.300" /><path d="M0 2.500L14 0v24L0 21.500z" fill="#2b579a" /><path d="M3 8l1.800 8L7 9l2.200 7L11 8" stroke="#fff" strokeWidth="1.500" /></Svg>, 'stack'],
  ['tianr...', <Svg key="i" w={24} h={24}><path d="M3 0h18l2 9H1z" fill="#2aa7e0" /><path d="M1 8h22v6H1z" fill="#e2532f" /><path d="M1 13h22v5H1z" fill="#f0a028" /><path d="M1 18h22v6H1z" fill="#47a447" /><path d="M10 0h4v9h-4z" fill="#5f4b32" /><path d="M9 9h6v7H9z" fill="#b98f3f" stroke="#4d3c20" /></Svg>, ''],
  ['耗时...', <Folded key="i" s={22} />, ''],
];

const W = '#ededed';
const tray = [
  <div key="0" className="overflow-hidden rounded-[3px]"><Folded s={14} /></div>,
  <Svg key="1" w={17} h={14}><path d="M8.500 0L6 8l-6 6L5 6z" fill="#e01b1b" /><path d="M8.500 0v5L2 14H0L5 6z" fill="#d81b1b" /><path d="M9 6l3-1 5 9h-4z" fill="#14b531" /></Svg>,
  <WeChat key="2" s={17} />,
  <Svg key="3" w={15} h={16}><path d="M0 0l15 7-8 1-5 5z" fill="#efb658" /><path d="M2 5l8 2-3 9z" fill="#3a2a14" /><path d="M0 0l9 7-6 9z" fill="#d99a35" /></Svg>,
  <Svg key="4" w={16} h={14}><path d="M1 9l4-5 3 2 3-5 3 1-2 4 3 3-4 2-3 1-3 2z" fill="#c9c9c9" /><circle cx="8" cy="8" r="3.500" fill="#c93a31" /><circle cx="3" cy="11" r="2" fill="#aaa" /><path d="M11 12l4-1" stroke="#ddd" /></Svg>,
  <Svg key="5" w={16} h={17}><path d="M1 1h14v15H1z" fill="#fafafa" stroke="#7c1f1f" strokeWidth="1.500" /><path d="M3 4h10M3 7h3M3 10h2M3 13h4" stroke="#777" /><circle cx="9" cy="9" r="3" stroke="#3d86c9" strokeWidth="1.500" fill="#d9ecfa" /><path d="M11 11l3 3" stroke="#444" strokeWidth="1.500" /></Svg>,
  <Svg key="6" w={15} h={17}><path d="M1 0h13v11H1z" fill="#aeb4b4" /><path d="M3.500 1.500l8 8M11.500 1.500l-8 8" stroke="#e32020" strokeWidth="2.200" /><path d="M0 12h15v5H0z" fill="#1b1b1b" /><path d="M2 13h3v3H2zM9 13h3v3H9z" fill="#ccc" /></Svg>,
  <Svg key="7" w={17} h={17}><path d="M4 3.500h12v8H5M10 12v3M6 15.500h8M1 1h4v4H1zM3 5v10" stroke={W} strokeWidth="1.200" /></Svg>,
  <Svg key="8" w={16} h={15}><path d="M6 4.500h8.500v8H4V9" stroke={W} strokeWidth="1.200" /><path d="M8 6.500h5v4H6z" fill={W} /><path d="M1.500 1v3M4.500 1v3M0 4h6v2L4 8H2L0 6zM3 8v5" stroke={W} /></Svg>,
  <Svg key="9" w={17} h={14}><path d="M1 5h3l3.500-3.500v11L4 9H1z" stroke={W} /><path d="M9.500 5q1.500 2 0 4M11.500 3.500q2.500 3.500 0 7" stroke={W} /><path d="M13.500 2q3.500 5 0 10" stroke="#888" /></Svg>,
];

function Taskbar() {
  return (
    <div className="flex h-[40px] w-[1366px] items-center bg-[linear-gradient(to_right,#464441,#3d3735_25%,#332a29_45%,#3a302a_55%,#35393a_70%,#3b4143_85%,#35393b)] text-[12.5px] text-[#f0f0f0]">
      <div className="flex w-[142px] items-center">
        <Svg w={17} h={17} className="ml-[16px]"><path d="M0 2.500l7.500-1V8H0zM8.500 1.300L17 0v8H8.500zM0 9h7.500v6.500L0 14.500zM8.500 9H17v8l-8.500-1.300z" fill="#fff" /></Svg>
        <Svg w={17} h={17} className="ml-[31px]"><path d="M.5 0v2.500h10V0M.5 17v-2.500h10V17M.5 5.500h10v6H.5zM14.500 1v3M14.500 6v6M14.500 14v3" stroke={W} strokeWidth="1.200" /><path d="M13 3h3v3h-3z" fill={W} /></Svg>
        <Svg w={23} h={25} className="-mt-[2px] ml-[26px]"><path d="M0 7h23v18H0z" fill="#f2f2f2" /><path d="M7 8V1.500h9V8" stroke="#f2f2f2" strokeWidth="1.500" /><path d="M6.500 10.500h4.500V15H6.500z" fill="#e8472b" /><path d="M12 10.500h4.500V15H12z" fill="#6fb02c" /><path d="M6.500 16h4.500v4.500H6.500z" fill="#1f93dd" /><path d="M12 16h4.500v4.500H12z" fill="#f7b41c" /></Svg>
      </div>
      {apps.map(([t, icon, st], i) => (
        <div key={i} className={`flex h-[40px] w-[82px] shrink-0 flex-col ${st === 'on' ? 'bg-[#676767]' : ''}`}>
          <div className={`flex h-[38px] items-center pt-[2px] ${st === 'on' ? 'pl-[7px]' : 'pl-[6px]'}`}>
            <div className="w-[27px] shrink-0">{icon}</div>
            <span className="tracking-[-0.2px] whitespace-nowrap">{t}</span>
          </div>
          {st === 'on' ? <div className="h-[2px] bg-[#76b9ed]" /> : (
            <div className="ml-[4px] flex h-[2px]">
              <div className={st === 'stack' ? 'w-[65px] bg-[#76b9ed]' : 'w-[73px] bg-[#76b9ed]'} />
              {st === 'stack' && <div className="w-[8px] bg-[#4f7590]" />}
            </div>
          )}
        </div>
      ))}
      <div className="ml-[2px] flex">
        {tray.map((t, i) => <div key={i} className="flex h-[20px] w-[24px] items-center justify-center">{t}</div>)}
      </div>
      <span className="ml-[5px] w-[26px] text-[12px]">ENG</span>
      <div className="ml-[9px] flex w-[64px] flex-col items-center text-[12px] leading-[19px] whitespace-nowrap"><span>20:45</span><span>2020/9/11</span></div>
      <Svg w={28} h={30} className="ml-[15px]"><path d="M1 6h17v13H8l-3 3v-3H1z" fill="#f0f0f0" /><path d="M4 9h11M4 12h11M4 15h11" stroke="#444" strokeWidth="1.300" /><circle cx="17" cy="20" r="8" fill="#3a3c3c" stroke="#aaa" /><text x="13.800" y="24.500" fontSize="12" fill="#fff" fontFamily="Noto Sans">2</text></Svg>
      <div className="ml-auto h-[40px] w-px shrink-0 bg-[#777]" />
    </div>
  );
}

function Ime() {
  return (
    <div className="absolute top-[625px] left-[1156px] flex h-[30px] w-[210px] items-center rounded-l-[2px] bg-[#303030] text-[11.8px] text-[#eaeaea]">
      <span className="w-[30px] text-center">中</span>
      <span className="w-[30px] text-center">简</span>
      <Svg w={150} h={20}>
        <path d="M18.500 5q2 5-1.500 8.500-3 2-7 0 6-2.500 8.500-8.500z" fill={W} />
        <circle cx="43" cy="10" r="1.500" stroke={W} /><path d="M48 8h2v3l-1.500 2v-2H48z" fill={W} />
        <path d="M70 6h11M70 9h11" stroke={W} strokeWidth="1.800" strokeDasharray="1.600 .75" /><path d="M70 13h11" stroke={W} strokeWidth="2" />
        <path d="M103.500 5v10M104 5l-4 4.500h3.500M107 4.500V14.500M107 14.500l3-3.500M105 7h3M107 10h3" stroke={W} strokeWidth="1.500" />
        <circle cx="135" cy="10" r="3.800" stroke={W} strokeWidth="2.600" /><circle cx="135" cy="10" r="5.400" stroke={W} strokeWidth="1.800" strokeDasharray="3.200 2.455" />
      </Svg>
    </div>
  );
}

export default function App() {
  return (
    <div className="relative h-[768px] w-[1366px] overflow-hidden font-['Noto_Sans','Noto_Sans_CJK_SC',sans-serif]">
      <Editor />
      <Taskbar />
      <div className="absolute top-[17px] left-[26px] flex h-[694px] w-[1329px] flex-col rounded-t-[5px] border border-[#303030] bg-[#535353]">
        <TitleRow />
        <div className="ml-[3px] flex h-[658px] w-[1321px] shrink-0 flex-col border border-[#383838]">
          <Options />
          <div className="flex h-[620px]">
            <Tools />
            <div className="w-[2px] shrink-0 bg-[#464646]" />
            <Doc />
            <div className="w-[3px] shrink-0 border-l border-[#383838]" />
            <Dock />
            <div className="w-[3px] shrink-0 border-r border-[#383838]" />
            <Panels />
          </div>
        </div>
      </div>
      <Info />
      <Ime />
    </div>
  );
}
